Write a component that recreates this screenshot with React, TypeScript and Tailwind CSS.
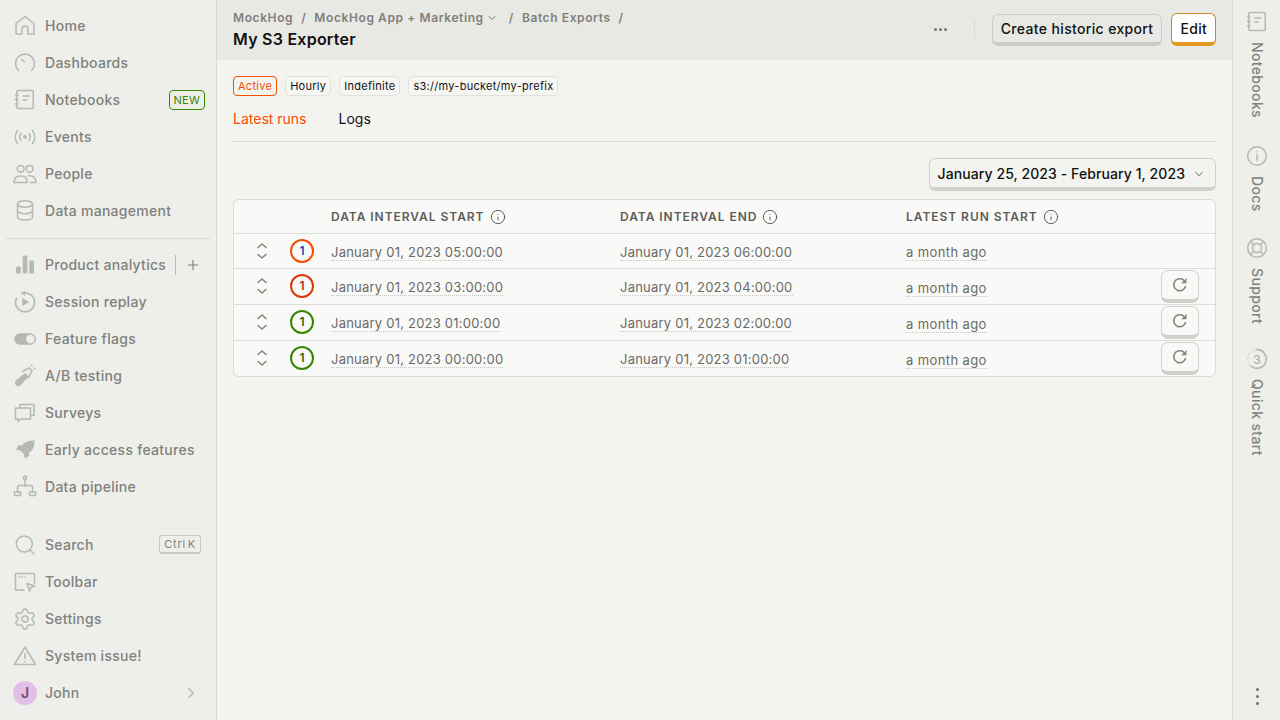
import type { ReactNode } from "react";
import { ChevronDown, ChevronRight, Info, Plus, Settings } from "lucide-react";

function Icon({ children, className = "" }: { children: ReactNode; className?: string }) {
  return (
    <svg
      viewBox="0 0 24 24"
      width={24}
      height={24}
      fill="none"
      stroke="currentColor"
      strokeWidth={1.5}
      strokeLinecap="round"
      strokeLinejoin="round"
      className={`shrink-0 text-[#b6b8b2] ${className}`}
    >
      {children}
    </svg>
  );
}

const NotebookGlyph = (
  <>
    <rect x="3.8" y="2.6" width="16.5" height="18" rx="1.5" />
    <path d="M10 8h6M10 12h3.5M2.5 7h2.5M2.5 11.5h2.5M2.5 16h2.5" />
  </>
);

const icons: Record<string, ReactNode> = {
  home: <path d="M3 20V9.5L12 2.5l9 7V20h-6v-5a3 3 0 0 0-6 0v5H3z" />,
  dashboards: <path d="M5.5 19.5a9.5 9.5 0 1 1 13 0M8.5 8.5l3 2.5" />,
  notebooks: NotebookGlyph,
  events: (
    <>
      <circle cx="12" cy="12" r="1.2" fill="currentColor" />
      <path d="M4.5 5.5a11 11 0 0 0 0 13M19.5 5.5a11 11 0 0 1 0 13M8 8.5a6 6 0 0 0 0 7M16 8.5a6 6 0 0 1 0 7" />
    </>
  ),
  people: (
    <>
      <circle cx="7.7" cy="6.8" r="3.4" />
      <circle cx="16.6" cy="6.8" r="3.4" />
      <path d="M1 20.5c0-4 2.6-6.5 6.7-6.5s6.5 2.5 6.5 6.5H1zM15.5 13.8c4.6-.6 7.5 2 7.5 6.7h-5.5" />
    </>
  ),
  data: (
    <>
      <ellipse cx="12" cy="5" rx="7.5" ry="3.2" />
      <path d="M4.5 5v13c0 1.8 3.4 3 7.5 3s7.5-1.2 7.5-3V5M4.5 11.5c0 1.8 3.4 3.2 7.5 3.2s7.5-1.4 7.5-3.2" />
    </>
  ),
  analytics: (
    <g fill="currentColor" stroke="none">
      <rect x="3" y="13.5" width="4.7" height="7" rx="1.2" />
      <rect x="9.7" y="2.5" width="4.7" height="18" rx="1.2" />
      <rect x="16.3" y="7.5" width="4.7" height="13" rx="1.2" />
    </g>
  ),
  replay: (
    <>
      <path d="M9 3.3a9.5 9.5 0 1 1-5.6 5" strokeWidth={1.7} />
      <path d="M12 0.8L8 3.3l4 2.6z" fill="currentColor" stroke="none" />
      <path d="M9.3 8l7 4-7 4z" fill="currentColor" stroke="none" />
    </>
  ),
  flags: (
    <>
      <rect x="1.3" y="6.3" width="21.7" height="11.4" rx="5.7" fill="currentColor" stroke="none" />
      <circle cx="17.3" cy="12" r="4.3" fill="#eeefea" stroke="none" />
    </>
  ),
  ab: (
    <>
      <path d="M3 16.5l9-7.5 3.5 3.5-7.5 8.5c-1.5 1.5-3.5 1.7-5 .3s-1.3-3.3 0-4.8z" fill="currentColor" stroke="none" />
      <path d="M9.5 7.5l6.5-3.7 3 3-3.8 7" />
      <circle cx="18.8" cy="1.5" r="0.9" fill="currentColor" stroke="none" />
      <circle cx="21.5" cy="4.5" r="0.9" fill="currentColor" stroke="none" />
    </>
  ),
  surveys: (
    <>
      <path d="M7 6.5V3.5h14v11h-3" />
      <path d="M2.5 7h15v11H7.5l-2.5 2.5V18H2.5V7z" />
    </>
  ),
  rocket: (
    <path
      d="M21.5 2.5c.3 5.5-1.5 9.5-5.5 12.3l.3 3.2-4.5 2.5-1-4.5-3.3-3.3-4.5-1L5.5 7.2l3.2.3C11.5 3.8 16 2.2 21.5 2.5z"
      fill="currentColor"
      stroke="none"
    />
  ),
  pipeline: (
    <>
      <circle cx="12" cy="2.8" r="1.6" />
      <rect x="1.5" y="17" width="6" height="3.5" />
      <rect x="16.5" y="17" width="6" height="3.5" />
      <path d="M12 4.5V10M4.5 17v-4.5a2 2 0 0 1 2-2h11a2 2 0 0 1 2 2V17" />
      <circle cx="12" cy="10.5" r="1.2" fill="currentColor" stroke="none" />
    </>
  ),
  search: (
    <>
      <circle cx="11.3" cy="11" r="8" />
      <path d="M17 17l4 4" />
    </>
  ),
  toolbar: (
    <>
      <path d="M11 20H2.5V3.5h19V13" />
      <path d="M6 7h.5M9 7h.5M12 7h.5" strokeWidth={1.3} />
      <path d="M14 13.5l7.5 2.5-3.5 1.5-1.5 3.5z" />
    </>
  ),
  warning: (
    <>
      <path d="M12 3L1.5 20.5h21L12 3z" />
      <path d="M12 9.5v5M12 17.5v.3" />
    </>
  ),
};

function NavItem({ icon, label, right }: { icon: ReactNode; label: string; right?: ReactNode }) {
  return (
    <div className="flex h-[37px] items-center pl-[13px] pr-[11px]">
      {icon}
      <span className="ml-2 flex-1 whitespace-nowrap text-sm font-medium tracking-[0.02em] text-[#80817d]">{label}</span>
      {right}
    </div>
  );
}

function Sidebar() {
  return (
    <aside className="flex h-full w-[217px] shrink-0 flex-col border-r border-[#d8d9d4] bg-[#eeefea] pt-[7px]">
      <NavItem icon={<Icon>{icons.home}</Icon>} label="Home" />
      <NavItem icon={<Icon>{icons.dashboards}</Icon>} label="Dashboards" />
      <NavItem
        icon={<Icon>{icons.notebooks}</Icon>}
        label="Notebooks"
        right={
          <span className="rounded-[4px] border border-[#388600] px-1 text-[11px] leading-[18px] tracking-[0.02em] text-[#388600]">
            NEW
          </span>
        }
      />
      <NavItem icon={<Icon>{icons.events}</Icon>} label="Events" />
      <NavItem icon={<Icon>{icons.people}</Icon>} label="People" />
      <NavItem icon={<Icon>{icons.data}</Icon>} label="Data management" />
      <div className="mx-[6px] mb-[7px] mt-[9px] h-px bg-[#d8d9d4]" />
      <NavItem
        icon={<Icon>{icons.analytics}</Icon>}
        label="Product analytics"
        right={
          <span className="flex items-center text-[#7a7b77]">
            <span className="mr-[9px] h-5 w-px bg-[#b9bab5]" />
            <Plus size={16} strokeWidth={1.6} className="mr-[4px]" />
          </span>
        }
      />
      <NavItem icon={<Icon>{icons.replay}</Icon>} label="Session replay" />
      <NavItem icon={<Icon>{icons.flags}</Icon>} label="Feature flags" />
      <NavItem icon={<Icon>{icons.ab}</Icon>} label="A/B testing" />
      <NavItem icon={<Icon>{icons.surveys}</Icon>} label="Surveys" />
      <NavItem icon={<Icon>{icons.rocket}</Icon>} label="Early access features" />
      <NavItem icon={<Icon>{icons.pipeline}</Icon>} label="Data pipeline" />
      <div className="h-[21px]" />
      <NavItem
        icon={<Icon>{icons.search}</Icon>}
        label="Search"
        right={
          <span className="mr-1 rounded-[3px] border border-b-2 border-[#c9cac5] px-1 text-[11px] leading-[16px] tracking-[0.07em] text-[#81827e] [word-spacing:-2px]">
            Ctrl K
          </span>
        }
      />
      <NavItem icon={<Icon>{icons.toolbar}</Icon>} label="Toolbar" />
      <NavItem icon={<Settings size={24} strokeWidth={1.4} className="shrink-0 text-[#b6b8b2]" />} label="Settings" />
      <NavItem icon={<Icon>{icons.warning}</Icon>} label="System issue!" />
      <NavItem
        icon={
          <span className="flex h-6 w-6 shrink-0 items-center justify-center rounded-full bg-[#e2bfe6] text-sm font-semibold text-[#6f4a74]">
            J
          </span>
        }
        label="John"
        right={<ChevronRight size={18} strokeWidth={2} className="mr-[5px] text-[#b6b8b2]" />}
      />
    </aside>
  );
}

function Tag({ children, active }: { children: ReactNode; active?: boolean }) {
  return (
    <span
      className={`rounded-[4px] border px-[4px] text-[11px] leading-[18px] tracking-[0.025em] ${
        active ? "border-[#f54e00] text-[#f54e00]" : "border-[#e1e2dd] bg-[#f6f6f3] text-[#111]"
      }`}
    >
      {children}
    </span>
  );
}

function Breadcrumb() {
  return (
    <div className="flex items-center text-xs font-semibold tracking-[0.05em] text-[#7f807c]">
      <span>MockHog</span>
      <span className="mx-[8px]">/</span>
      <span>MockHog App + Marketing</span>
      <ChevronDown size={12} strokeWidth={2} className="ml-[2px]" />
      <span className="ml-[11px] mr-[8px]">/</span>
      <span>Batch Exports</span>
      <span className="ml-[8px]">/</span>
    </div>
  );
}

function Header() {
  return (
    <header className="flex h-[60px] shrink-0 items-center justify-between bg-[#e8e9e4] pl-4 pr-4">
      <div className="flex flex-col gap-[3px] pb-[2px]">
        <Breadcrumb />
        <h1 className="text-base font-semibold leading-5 tracking-[0.015em] text-[#111]">My S3 Exporter</h1>
      </div>
      <div className="flex items-center pb-px">
        <span className="flex gap-[2px]">
          <span className="h-[3px] w-[3px] rounded-full bg-[#777874]" />
          <span className="h-[3px] w-[3px] rounded-full bg-[#777874]" />
          <span className="h-[3px] w-[3px] rounded-full bg-[#777874]" />
        </span>
        <span className="ml-[27px] mr-[17px] h-[17px] w-px bg-[#d8d9d4]" />
        <button className="h-[32px] rounded-[6px] border border-b-[4px] border-[#cbccc7] bg-[#e8e9e4] px-2 pt-px text-sm font-medium leading-[26px] tracking-[0.025em] text-[#111]">
          Create historic export
        </button>
        <button className="ml-[9px] h-[33px] rounded-[6px] border border-b-[4px] border-[#c98a2a] border-b-[#e2981d] bg-white px-2 pt-px text-sm font-medium leading-[26px] tracking-[0.02em] text-[#111]">
          Edit
        </button>
      </div>
    </header>
  );
}

function Expander() {
  return (
    <span className="flex flex-col items-center gap-[4px] text-[#85867f]">
      <svg width="12" height="7" viewBox="0 0 12 7" fill="none" stroke="currentColor" strokeWidth="1.6" strokeLinecap="round" strokeLinejoin="round">
        <path d="M2 5.5l4-3.5 4 3.5" />
      </svg>
      <svg width="12" height="7" viewBox="0 0 12 7" fill="none" stroke="currentColor" strokeWidth="1.6" strokeLinecap="round" strokeLinejoin="round">
        <path d="M2 1.5L6 5l4-3.5" />
      </svg>
    </span>
  );
}

function RetryButton() {
  return (
    <button className="flex h-[33px] w-[38px] items-center justify-center rounded-[7px] border border-b-[4px] border-[#d0d1cc] bg-[#f9f9f7] text-[#85867f]">
      <svg width="16" height="16" viewBox="0 0 16 16" fill="none" stroke="currentColor" strokeWidth="1.6" strokeLinecap="round">
        <path d="M13.5 9.5A6 6 0 1 1 11.5 3" />
        <path d="M14.5 1v5.3H9.2z" fill="currentColor" stroke="none" />
      </svg>
    </button>
  );
}

type Run = {
  start: string;
  end: string;
  ring: string;
  digit: string;
  retry: boolean;
};

const RUNS: Run[] = [
  { start: "January 01, 2023 05:00:00", end: "January 01, 2023 06:00:00", ring: "border-[#f54e00]", digit: "text-[#1d4aaf]", retry: false },
  { start: "January 01, 2023 03:00:00", end: "January 01, 2023 04:00:00", ring: "border-[#db3707]", digit: "text-[#a3300d]", retry: true },
  { start: "January 01, 2023 01:00:00", end: "January 01, 2023 02:00:00", ring: "border-[#388600]", digit: "text-[#2c6a00]", retry: true },
  { start: "January 01, 2023 00:00:00", end: "January 01, 2023 01:00:00", ring: "border-[#388600]", digit: "text-[#2c6a00]", retry: true },
];

function HeadCell({ label }: { label: string }) {
  return (
    <th className="pl-2 pt-px text-left text-xs font-semibold uppercase tracking-[0.08em] text-[#5c5d59]">
      <span className="flex items-center gap-[5px]">
        {label}
        <Info size={16} strokeWidth={1.5} />
      </span>
    </th>
  );
}

function TimeText({ children, wide }: { children: ReactNode; wide?: boolean }) {
  return (
    <span
      className={`border-b border-dotted border-[#c6c7c2] text-[13px] leading-4 text-[#6a6b67] ${
        wide ? "tracking-[0.03em]" : "tracking-[0.017em]"
      }`}
    >
      {children}
    </span>
  );
}

function RunsTable() {
  return (
    <div className="overflow-hidden rounded-[6px] border border-[#dcddd8] bg-[#f9f9f7]">
      <table className="w-full table-fixed border-collapse">
        <colgroup>
          <col className="w-[56px]" />
          <col className="w-[33px]" />
          <col className="w-[289px]" />
          <col className="w-[286px]" />
          <col />
        </colgroup>
        <thead>
          <tr className="h-[33px] border-b border-[#dcddd8]">
            <th />
            <th />
            <HeadCell label="Data interval start" />
            <HeadCell label="Data interval end" />
            <HeadCell label="Latest run start" />
          </tr>
        </thead>
        <tbody>
          {RUNS.map((run, i) => (
            <tr key={run.start} className={`${i === 0 ? "h-[35px]" : "h-[36px]"} ${i < RUNS.length - 1 ? "border-b border-[#dcddd8]" : ""}`}>
              <td>
                <span className="flex justify-center">
                  <Expander />
                </span>
              </td>
              <td>
                <span className={`flex h-6 w-6 items-center justify-center rounded-full border-2 text-xs font-semibold ${run.ring} ${run.digit}`}>
                  1
                </span>
              </td>
              <td className="pl-2">
                <TimeText>{run.start}</TimeText>
              </td>
              <td className="pl-2">
                <TimeText>{run.end}</TimeText>
              </td>
              <td className="pl-2">
                <span className="flex h-[33px] items-center justify-between pr-4">
                  <span className="mt-px">
                    <TimeText wide>a month ago</TimeText>
                  </span>
                  {run.retry ? <RetryButton /> : null}
                </span>
              </td>
            </tr>
          ))}
        </tbody>
      </table>
    </div>
  );
}

function Main() {
  return (
    <main className="flex min-w-0 flex-1 flex-col bg-[#f3f4ef]">
      <Header />
      <div className="px-4 pt-4">
        <div className="flex gap-2">
          <Tag active>Active</Tag>
          <Tag>Hourly</Tag>
          <Tag>Indefinite</Tag>
          <Tag>s3://my-bucket/my-prefix</Tag>
        </div>
        <div className="mt-[13px] flex h-[33px] gap-8 border-b border-[#d8d9d4] text-sm leading-5">
          <span className="text-[#f54e00]">Latest runs</span>
          <span className="text-[#111]">Logs</span>
        </div>
        <div className="mt-4 flex justify-end">
          <button className="flex h-[33px] items-center gap-[7px] rounded-[6px] border border-b-[4px] border-[#d0d1cc] bg-[#f3f4ef] pl-2 pr-[9px] pt-px text-sm font-medium tracking-[0.006em] text-[#111]">
            January 25, 2023 - February 1, 2023
            <ChevronDown size={14} strokeWidth={1.75} className="text-[#7d7e7a]" />
          </button>
        </div>
        <div className="mt-2">
          <RunsTable />
        </div>
      </div>
    </main>
  );
}

function RailItem({ icon, label, className = "" }: { icon: ReactNode; label: string; className?: string }) {
  return (
    <div className={`flex flex-col items-center gap-2 ${className}`}>
      {icon}
      <span className="text-sm font-medium tracking-[0.025em] text-[#80817d] [writing-mode:vertical-rl]">{label}</span>
    </div>
  );
}

function RightRail() {
  return (
    <aside className="flex h-full w-[48px] shrink-0 flex-col items-center gap-6 border-l border-[#d8d9d4] bg-[#eeefea] pt-[10px]">
      <RailItem className="mb-[2px]" icon={<Icon>{NotebookGlyph}</Icon>} label="Notebooks" />
      <RailItem
        icon={
          <Icon>
            <circle cx="12" cy="12" r="9.3" />
            <path d="M12 11v5.5M12 7.8v.2" />
          </Icon>
        }
        label="Docs"
      />
      <RailItem
        className="-mb-px"
        icon={
          <Icon>
            <circle cx="12" cy="12" r="9.3" />
            <circle cx="12" cy="12" r="4.5" />
            <path d="M5.5 5.5l3.3 3.3M18.5 5.5l-3.3 3.3M5.5 18.5l3.3-3.3M18.5 18.5l-3.3-3.3" />
          </Icon>
        }
        label="Support"
      />
      <RailItem
        icon={
          <Icon>
            <path d="M12 2.7a9.3 9.3 0 1 1-6 16.4" strokeWidth={1.7} />
            <path d="M6 19.1A9.3 9.3 0 0 1 12 2.7" strokeWidth={1} className="opacity-40" />
            <text x="12" y="16.5" textAnchor="middle" fontSize="12" fontWeight="600" fill="currentColor" stroke="none">
              3
            </text>
          </Icon>
        }
        label="Quick start"
      />
      <div className="mt-auto mb-[15px] ml-px flex flex-col gap-[4px]">
        <span className="h-[3px] w-[3px] rounded-full bg-[#6f706c]" />
        <span className="h-[3px] w-[3px] rounded-full bg-[#6f706c]" />
        <span className="h-[3px] w-[3px] rounded-full bg-[#6f706c]" />
      </div>
    </aside>
  );
}

export default function App() {
  return (
    <div className="flex h-[720px] w-[1280px] overflow-hidden font-['Inter',sans-serif]">
      <Sidebar />
      <Main />
      <RightRail />
    </div>
  );
}
